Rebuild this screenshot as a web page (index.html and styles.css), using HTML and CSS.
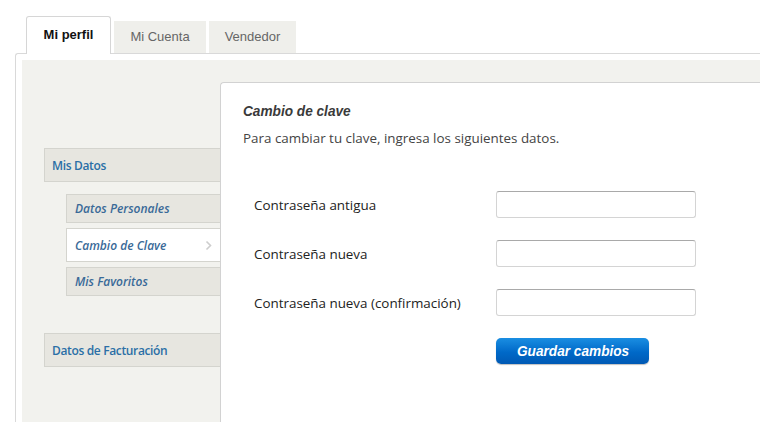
FILE: index.html
```html
<!DOCTYPE html>
<html lang="es">
<head>
<meta charset="utf-8">
<title>Mi perfil</title>
<link rel="stylesheet" href="styles.css">
</head>
<body>
<div class="page">
  <div class="tabs">
    <div class="tab active">Mi perfil</div>
    <div class="tab">Mi Cuenta</div>
    <div class="tab">Vendedor</div>
  </div>
  <div class="frame">
    <div class="panel">
      <nav class="sidebar">
        <div class="nav-main">Mis Datos</div>
        <div class="nav-sub">
          <div class="nav-item">Datos Personales</div>
          <div class="nav-item current">Cambio de Clave<svg class="chev" width="7" height="11" viewBox="0 0 7 11"><polyline points="1.5,1.5 5.5,5.5 1.5,9.5" fill="none" stroke="#cdcdcd" stroke-width="1.6"/></svg></div>
          <div class="nav-item">Mis Favoritos</div>
        </div>
        <div class="nav-main">Datos de Facturación</div>
      </nav>
      <section class="content">
        <h2 class="title"><span class="narrow">Cambio de clave</span></h2>
        <p class="desc">Para cambiar tu clave, ingresa los siguientes datos.</p>
        <form class="form">
          <label class="lbl">Contraseña antigua</label>
          <input class="field" type="password">
          <label class="lbl">Contraseña nueva</label>
          <input class="field" type="password">
          <label class="lbl">Contraseña nueva (confirmación)</label>
          <input class="field" type="password">
          <span></span>
          <button class="btn" type="button"><span class="narrow">Guardar cambios</span></button>
        </form>
      </section>
    </div>
  </div>
</div>
</body>
</html>
```
FILE: styles.css
```css
html, body {
  margin: 0;
  padding: 0;
  background: #fff;
  overflow: hidden;
  height: 422px;
}
body {
  font-family: "Open Sans", "DejaVu Sans", sans-serif;
  color: #333;
}
.page {
  padding: 16px 0 0 15px;
  width: 745px;
  height: 406px;
  overflow: hidden;
}
.tabs {
  display: flex;
  align-items: flex-end;
  gap: 3px;
  margin-left: 11px;
  height: 37px;
}
.tab {
  font-family: "Liberation Sans", Arial, sans-serif;
  font-size: 13px;
  color: #666;
  background: #efefeb;
  height: 32px;
  width: 92px;
  box-sizing: border-box;
  display: flex;
  align-items: center;
  justify-content: center;
  padding-bottom: 2px;
}
.tab:nth-child(3) { width: 87px; }
.tab.active {
  width: 85px;
  height: 38px;
  background: #fff;
  color: #111;
  font-weight: bold;
  border: 1px solid #d6d6d6;
  border-bottom: none;
  border-radius: 3px 3px 0 0;
  position: relative;
  z-index: 2;
  margin-bottom: -1px;
  padding-bottom: 3px;
}
.frame {
  border: 1px solid #d9d9d9;
  border-right: none;
  border-bottom: none;
  border-radius: 3px 0 0 0;
  padding: 6px 0 0 6px;
  width: 760px;
  height: 369px;
  box-sizing: border-box;
}
.panel {
  background: #f2f2ee;
  display: flex;
  height: 100%;
}
.sidebar {
  width: 198px;
  flex: none;
  padding: 88px 0 0 22px;
  box-sizing: border-box;
  display: flex;
  flex-direction: column;
}
.nav-main {
  height: 34px;
  box-sizing: border-box;
  background: #e7e6e0;
  border: 1px solid #d4d4ce;
  border-right: none;
  color: #2b6fa6;
  font-size: 12px;
  letter-spacing: -0.35px;
  font-weight: 600;
  padding-left: 7px;
  display: flex;
  align-items: center;
}
.nav-main + .nav-sub { margin-top: 12px; }
.nav-sub {
  margin-left: 22px;
  display: flex;
  flex-direction: column;
  gap: 5px;
  margin-bottom: 37px;
}
.nav-item {
  height: 29px;
  box-sizing: border-box;
  background: #e7e6e0;
  border: 1px solid #d4d4ce;
  border-right: none;
  color: #3a6a98;
  font-size: 12px;
  font-weight: 600;
  font-style: italic;
  padding-left: 8px;
  display: flex;
  align-items: center;
  position: relative;
}
.nav-item.current {
  height: 34px;
  background: #fff;
}
.chev {
  position: absolute;
  right: 8px;
  top: 11px;
}
.content {
  flex: 1;
  margin-top: 22px;
  background: #fff;
  border: 1px solid #d2d2d2;
  border-right: none;
  border-bottom: none;
  border-radius: 4px 0 0 0;
  padding: 19px 22px 0 22px;
}
.narrow {
  display: inline-block;
  transform: scaleX(0.88);
  transform-origin: left center;
}
.title {
  margin: 0;
  font-family: "Liberation Sans", Arial, sans-serif;
  font-size: 15.5px;
  font-weight: bold;
  font-style: italic;
  color: #3a3a3a;
  line-height: 18px;
}
.desc {
  margin: 9px 0 0 0;
  font-size: 13.4px;
  color: #444;
  line-height: 18px;
}
.form {
  display: grid;
  grid-template-columns: 242px 200px;
  row-gap: 22px;
  margin: 44px 0 0 11px;
  align-items: center;
}
.lbl {
  font-size: 13.4px;
  color: #222;
}
.field {
  width: 200px;
  height: 27px;
  box-sizing: border-box;
  border: 1px solid #d4d4d4;
  border-top-color: #a9a9a9;
  border-radius: 3px;
  background: #fff;
  margin: 0;
  padding: 0 6px;
}
.btn {
  width: 153px;
  height: 26px;
  border: none;
  border-radius: 5px;
  background: linear-gradient(#1a8ee2, #0069c8 55%, #0059b4);
  color: #fff;
  font-family: "Liberation Sans", Arial, sans-serif;
  font-size: 15.5px;
  font-weight: bold;
  font-style: italic;
  padding: 0 0 0 21px;
  text-align: left;
  box-shadow: 0 1px 1px rgba(0,0,0,0.25);
}
```
